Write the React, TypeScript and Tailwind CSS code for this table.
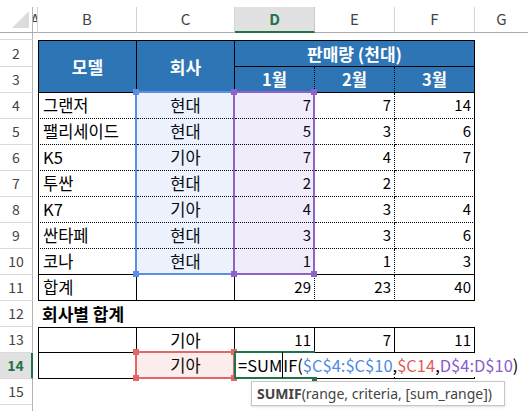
import React from "react"

type CellProps = { className?: string; children?: React.ReactNode }

function Cell({ className = "", children }: CellProps) {
  return <div className={`flex items-center min-w-0 whitespace-nowrap ${className}`}>{children}</div>
}

function RowHead({ n, active = false }: { n: string; active?: boolean }) {
  if (active) {
    return (
      <Cell className="justify-center bg-[#e1e1e1] border-b border-b-[#dadada] border-r-2 border-r-[#217346] text-[14px] font-bold text-[#217346]">
        {n}
      </Cell>
    )
  }
  return (
    <Cell className="justify-center border-r border-b border-r-[#b4b4b4] border-b-[#dadada] text-[14px] text-[#444]">
      {n}
    </Cell>
  )
}

const rows = [
  ["그랜저", "현대", "7", "7", "14"],
  ["팰리세이드", "현대", "5", "3", "6"],
  ["K5", "기아", "7", "4", "7"],
  ["투싼", "현대", "2", "2", ""],
  ["K7", "기아", "4", "3", "4"],
  ["싼타페", "현대", "3", "3", "6"],
  ["코나", "현대", "1", "1", "3"],
]

function Corner({ x, y, color }: { x: number; y: number; color: string }) {
  return <div className="absolute w-[6px] h-[6px]" style={{ left: x, top: y, background: color }} />
}

export default function App() {
  return (
    <div className="relative w-[528px] h-[411px] overflow-hidden bg-white pt-[7px] font-['Noto_Sans_CJK_KR',sans-serif] text-black">
      <div className="grid grid-cols-[33px_5px_99px_98px_80px_80px_80px_1fr] grid-rows-[26px_7px_27px_repeat(13,26px)_6px]">
        {/* column headers */}
        <Cell className="relative border-r border-b border-r-[#b4b4b4] border-b-[#ababab]">
          <svg width="33" height="26" viewBox="0 0 33 26" className="absolute left-0 top-0">
            <polygon points="29,4 29,21 12,21" fill="#dcdcdc" />
          </svg>
        </Cell>
        <Cell className="justify-center overflow-hidden border-r border-b border-r-[#d4d4d4] border-b-[#ababab] text-[15px] text-[#444]">A</Cell>
        <Cell className="justify-center border-r border-b border-r-[#d4d4d4] border-b-[#ababab] text-[15px] text-[#444]">B</Cell>
        <Cell className="justify-center border-r border-b border-r-[#d4d4d4] border-b-[#ababab] text-[15px] text-[#444]">C</Cell>
        <Cell className="justify-center bg-[#e1e1e1] border-r border-r-[#c8c8c8] border-b-2 border-b-[#217346] text-[15px] font-bold text-[#217346]">D</Cell>
        <Cell className="justify-center border-r border-b border-r-[#d4d4d4] border-b-[#ababab] text-[15px] text-[#444]">E</Cell>
        <Cell className="justify-center border-r border-b border-r-[#d4d4d4] border-b-[#ababab] text-[15px] text-[#444]">F</Cell>
        <Cell className="justify-center border-b border-b-[#ababab] text-[15px] text-[#444]">G</Cell>

        {/* row 1 */}
        <Cell className="border-r border-b border-r-[#b4b4b4] border-b-[#dadada]" />
        <div className="col-span-7" />

        {/* rows 2-3 header */}
        <RowHead n="2" />
        <div />
        <Cell className="row-span-2 justify-center bg-[#2e75b6] border border-black text-[17px] font-bold text-white">모델</Cell>
        <Cell className="row-span-2 justify-center bg-[#2e75b6] border-t border-r border-b border-black text-[17px] font-bold text-white">회사</Cell>
        <Cell className="col-span-3 justify-center bg-[#2e75b6] border-t border-r border-b border-black text-[17px] font-bold text-white">판매량 (천대)</Cell>
        <div />
        <RowHead n="3" />
        <div />
        <Cell className="justify-center bg-[#2e75b6] border-r border-b border-black [border-right-style:dotted]! text-[16.5px] font-bold text-white">1월</Cell>
        <Cell className="justify-center bg-[#2e75b6] border-r border-b border-black [border-right-style:dotted]! text-[16.5px] font-bold text-white">2월</Cell>
        <Cell className="justify-center bg-[#2e75b6] border-r border-b border-black text-[16.5px] font-bold text-white">3월</Cell>
        <div />

        {/* data rows */}
        {rows.map((r, i) => {
          const last = i === rows.length - 1
          return (
            <React.Fragment key={i}>
              <RowHead n={String(i + 4)} />
              <div />
              <Cell className={last ? "border-l border-r border-b border-black pl-[4px] text-[16.5px]" : "border-l border-r border-b border-black [border-bottom-style:dotted]! pl-[4px] text-[16.5px]"}>{r[0]}</Cell>
              <Cell className={last ? "justify-center border-r border-b border-black text-[16.5px]" : "justify-center border-r border-b border-black [border-bottom-style:dotted]! text-[16.5px]"}>{r[1]}</Cell>
              <Cell className={last ? "justify-end pr-[3px] border-r border-b border-black [border-right-style:dotted]! text-[15px]" : "justify-end pr-[3px] border-r border-b border-black border-dotted text-[15px]"}>{r[2]}</Cell>
              <Cell className={last ? "justify-end pr-[3px] border-r border-b border-black [border-right-style:dotted]! text-[15px]" : "justify-end pr-[3px] border-r border-b border-black border-dotted text-[15px]"}>{r[3]}</Cell>
              <Cell className={last ? "justify-end pr-[3px] border-r border-b border-black text-[15px]" : "justify-end pr-[3px] border-r border-b border-black [border-bottom-style:dotted]! text-[15px]"}>{r[4]}</Cell>
              <div />
            </React.Fragment>
          )
        })}

        {/* row 11 totals */}
        <RowHead n="11" />
        <div />
        <Cell className="border-l border-r border-b border-black pl-[4px] text-[16.5px]">합계</Cell>
        <Cell className="border-r border-b border-black" />
        <Cell className="justify-end pr-[3px] border-r border-b border-black [border-right-style:dotted]! text-[15px]">29</Cell>
        <Cell className="justify-end pr-[3px] border-r border-b border-black [border-right-style:dotted]! text-[15px]">23</Cell>
        <Cell className="justify-end pr-[3px] border-r border-b border-black text-[15px]">40</Cell>
        <div />

        {/* row 12 */}
        <RowHead n="12" />
        <div />
        <Cell className="pl-[4px] text-[17px] font-bold">회사별 합계</Cell>
        <div className="col-span-5" />

        {/* row 13 */}
        <RowHead n="13" />
        <div />
        <Cell className="border-l border-t border-r border-b border-black" />
        <Cell className="justify-center border-t border-r border-b border-black text-[16.5px]">기아</Cell>
        <Cell className="justify-end pr-[3px] border-t border-r border-b border-black text-[15px]">11</Cell>
        <Cell className="justify-end pr-[3px] border-t border-r border-b border-black text-[15px]">7</Cell>
        <Cell className="justify-end pr-[3px] border-t border-r border-b border-black text-[15px]">11</Cell>
        <div />

        {/* row 14 */}
        <RowHead n="14" active />
        <div />
        <Cell className="border-l border-r border-b border-black" />
        <Cell className="justify-center border-r border-b border-black text-[16.5px]">기아</Cell>
        <Cell className="border-r border-b border-black" />
        <Cell className="border-r border-b border-black" />
        <Cell className="border-r border-b border-black" />
        <div />

        {/* row 15-16 */}
        <RowHead n="15" />
        <div className="col-span-7" />
        <Cell className="border-r border-r-[#b4b4b4]" />
        <div className="col-span-7" />
      </div>

      {/* range highlights */}
      <div className="absolute left-[135px] top-[91px] w-[100px] h-[184px] border-2 border-[#5b8ee6] bg-[#4678e6]/10" />
      <div className="absolute left-[233px] top-[91px] w-[82px] h-[184px] border-2 border-[#8e63c9] bg-[#7846c8]/10" />
      <Corner x={133} y={89} color="#5b8ee6" />
      <Corner x={133} y={271} color="#5b8ee6" />
      <Corner x={231} y={89} color="#8e63c9" />
      <Corner x={231} y={271} color="#8e63c9" />
      <Corner x={311} y={89} color="#8e63c9" />
      <Corner x={311} y={271} color="#8e63c9" />

      <div className="absolute left-[135px] top-[351px] w-[100px] h-[28px] border-2 border-[#e46666] bg-[#e65050]/10" />
      <Corner x={133} y={349} color="#e46666" />
      <Corner x={133} y={375} color="#e46666" />
      <Corner x={231} y={349} color="#e46666" />
      <Corner x={231} y={375} color="#e46666" />

      {/* active cell being edited */}
      <div className="absolute left-[234px] top-[351px] w-[81px] h-[28px] border-2 border-[#217346]" />
      <div className="absolute left-[312px] top-[376px] w-[5px] h-[5px] bg-[#217346]" />
      <div className="absolute left-[236px] top-[353px] w-[288px] h-[24px] bg-white flex items-center pl-[2px] text-[16.5px] whitespace-nowrap">
        <span>=SUM</span>
        <span className="inline-block w-px h-[26px] bg-black" />
        <span>IF(</span>
        <span className="text-[#4f8ae8]">$C$4:$C$10</span>
        <span>,</span>
        <span className="text-[#e45a5a]">$C14</span>
        <span>,</span>
        <span className="text-[#8a5ccc]">D$4:D$10</span>
        <span>)</span>
      </div>

      {/* function tooltip */}
      <div className="absolute left-[251px] top-[381px] w-[254px] h-[25px] bg-white border border-[#c6c6c6] shadow-sm flex items-center pl-[5px] font-['Noto_Sans',sans-serif] text-[14px] text-[#444] whitespace-nowrap">
        <span className="font-bold">SUMIF</span>
        <span>(range, criteria, [sum_range])</span>
      </div>
    </div>
  )
}
